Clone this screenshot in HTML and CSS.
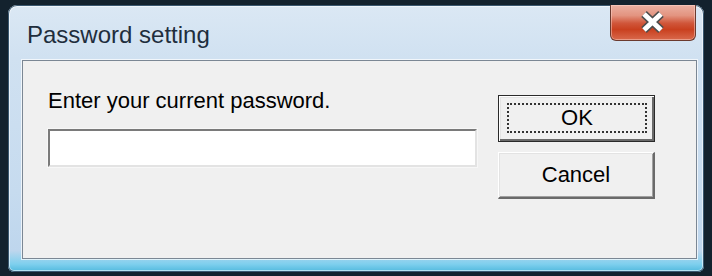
FILE: index.html
```html
<!DOCTYPE html>
<html>
<head>
<meta charset="utf-8">
<link rel="stylesheet" href="styles.css">
</head>
<body>
<div class="window">
  <div class="titlebar">
    <span class="title">Password setting</span>
    <div class="close">
      <svg width="86" height="36" viewBox="0 0 86 36">
        <path d="M34 10 L51 26 M51 10 L34 26" stroke="#4d4d4d" stroke-width="8" fill="none"/>
        <path d="M34 10 L51 26 M51 10 L34 26" stroke="#ffffff" stroke-width="5" fill="none"/>
      </svg>
    </div>
  </div>
  <div class="client">
    <div class="form">
      <div class="label">Enter your current password.</div>
      <div class="textbox"></div>
    </div>
    <div class="buttons">
      <div class="btn btn-default"><span class="focus">OK</span></div>
      <div class="btn btn-cancel">Cancel</div>
    </div>
  </div>
</div>
</body>
</html>
```
FILE: styles.css
```css
html, body {
  margin: 0;
  padding: 0;
}
body {
  width: 712px;
  height: 276px;
  overflow: hidden;
  background: #13222e;
  font-family: "Liberation Sans", Arial, sans-serif;
}
.window {
  margin: 5px 0 0 8px;
  width: 696px;
  height: 267px;
  box-sizing: border-box;
  border-radius: 9px 9px 6px 6px;
  background: linear-gradient(180deg, #dbe8f4 0%, #d0e1f1 20%, #c6dbef 70%, #bed6ed 92%, #7fd0ee 97%, #4fb8dd 100%);
  box-shadow: inset 0 0 0 1px #3a5870, inset 0 0 0 2px rgba(255,255,255,0.55);
  display: flex;
  flex-direction: column;
  padding: 0 7px 13px 14px;
}
.titlebar {
  height: 55px;
  display: flex;
  align-items: flex-start;
}
.title {
  margin: 16px 0 0 5px;
  font-size: 24px;
  line-height: 28px;
  color: #1f2e3d;
}
.close {
  margin-left: auto;
  margin-right: 1px;
  width: 86px;
  height: 36px;
  box-sizing: border-box;
  border: 1px solid #6b3a2e;
  border-top: none;
  border-radius: 0 0 6px 6px;
  background: linear-gradient(180deg, #eab0a2 0%, #e39480 30%, #d0563a 52%, #c9401f 70%, #d9694c 100%);
  box-shadow: inset 0 0 0 1px rgba(255,220,210,0.45);
  overflow: hidden;
}
.close svg {
  display: block;
  margin: -1px 0 0 -1px;
}
.client {
  flex: 1;
  background: #f0f0f0;
  border: 1px solid #7b8794;
  box-shadow: 0 0 0 1px rgba(255,255,255,0.7);
  display: flex;
  align-items: flex-start;
  padding: 27px 0 0 25px;
  gap: 21px;
}
.form {
  width: 429px;
}
.label {
  font-size: 22px;
  line-height: 26px;
  color: #000;
}
.textbox {
  margin-top: 15px;
  height: 38px;
  box-sizing: border-box;
  background: #fff;
  border-top: 2px solid #7a7a7a;
  border-left: 2px solid #7a7a7a;
  border-bottom: 2px solid #e3e3e3;
  border-right: 2px solid #e3e3e3;
  box-shadow: 0 0 0 1px #f7f7f7;
}
.buttons {
  margin-top: 7px;
  display: flex;
  flex-direction: column;
  gap: 10px;
}
.btn {
  width: 157px;
  height: 47px;
  box-sizing: border-box;
  background: #f0f0f0;
  font-size: 22px;
  color: #000;
  display: flex;
  align-items: center;
  justify-content: center;
}
.btn-default {
  border: 1px solid #2a2a2a;
  box-shadow: inset 1px 1px 0 #fff, inset -2px -2px 0 #6a6a6a, inset 2px 2px 0 #e3e3e3;
  padding: 7px 7px 8px 8px;
}
.focus {
  flex: 1;
  align-self: stretch;
  border: 2px dotted #333;
  display: flex;
  align-items: center;
  justify-content: center;
}
.btn-cancel {
  border-top: 1px solid #fff;
  border-left: 1px solid #fff;
  border-right: 2px solid #6a6a6a;
  border-bottom: 2px solid #6a6a6a;
  box-shadow: inset 1px 1px 0 #e3e3e3, inset -1px -1px 0 #a0a0a0;
}
```
